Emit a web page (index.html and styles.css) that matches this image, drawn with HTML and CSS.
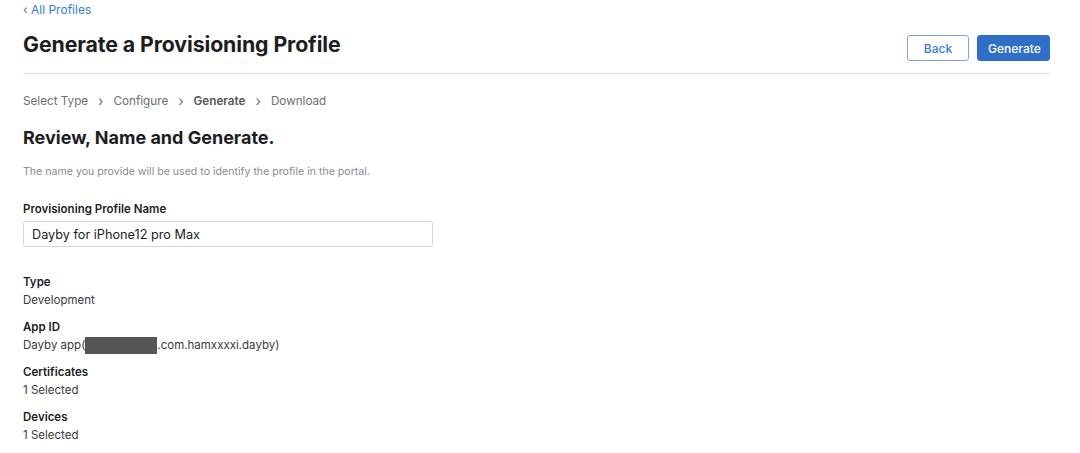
FILE: index.html
```html
<!DOCTYPE html>
<html lang="en">
<head>
    <meta charset="UTF-8">
    <title>Generate a Provisioning Profile</title>
    <link rel="stylesheet" href="styles.css">
</head>
<body>
    <div class="page">
        <a class="back-link" href="#">&lsaquo; All Profiles</a>
        <div class="header">
            <h1>Generate a Provisioning Profile</h1>
            <div class="actions">
                <button type="button" class="btn btn-secondary">Back</button>
                <button type="button" class="btn btn-primary">Generate</button>
            </div>
        </div>

        <ol class="steps">
            <li>Select Type</li>
            <li class="sep">&rsaquo;</li>
            <li>Configure</li>
            <li class="sep">&rsaquo;</li>
            <li class="current">Generate</li>
            <li class="sep">&rsaquo;</li>
            <li>Download</li>
        </ol>

        <h2>Review, Name and Generate.</h2>
        <p class="hint">The name you provide will be used to identify the profile in the portal.</p>

        <label class="field-label" for="profileName">Provisioning Profile Name</label>
        <input type="text" id="profileName" class="text-input" value="Dayby for iPhone12 pro Max">

        <dl class="summary">
            <dt>Type</dt>
            <dd>Development</dd>
            <dt>App ID</dt>
            <dd>Dayby app(<span class="redacted"></span>.com.hamxxxxi.dayby)</dd>
            <dt>Certificates</dt>
            <dd>1 Selected</dd>
            <dt>Devices</dt>
            <dd>1 Selected</dd>
        </dl>
    </div>
</body>
</html>
```

FILE: styles.css
```css
body {
    margin: 0;
    font-family: Inter, "Liberation Sans", Arial, sans-serif;
    color: #1d1d1f;
    background-color: #ffffff;
}
.page {
    width: 1027px;
    padding: 3px 0 0 23px;
}
.back-link {
    display: block;
    font-size: 12px;
    line-height: 14px;
    color: #3a7bd5;
    text-decoration: none;
}
.header {
    display: flex;
    align-items: flex-start;
    justify-content: space-between;
    height: 56px;
    border-bottom: 1px solid #e2e2e2;
}
h1 {
    margin: 14px 0 0;
    font-size: 21.3px;
    line-height: 26px;
    font-weight: 700;
    letter-spacing: -0.1px;
}
.actions {
    display: flex;
    gap: 8px;
    margin-top: 18px;
}
.btn {
    height: 26px;
    padding: 0 10px;
    border-radius: 3px;
    font-family: inherit;
    font-size: 12px;
    font-weight: 500;
    cursor: pointer;
}
.btn-secondary {
    width: 62px;
    background-color: #ffffff;
    color: #3a7bd5;
    border: 1px solid #7aa6e3;
}
.btn-primary {
    width: 73px;
    background-color: #2f6fc7;
    color: #ffffff;
    border: 1px solid #2f6fc7;
}
.steps {
    display: flex;
    gap: 10px;
    list-style: none;
    margin: 20px 0 0;
    padding: 0;
    font-size: 11.7px;
    line-height: 14px;
    color: #6e6e73;
}
.steps .sep {
    font-size: 14px;
    color: #6e6e73;
}
.steps .current {
    font-weight: 600;
    color: #555558;
}
h2 {
    margin: 19px 0 0;
    font-size: 18px;
    line-height: 22px;
    font-weight: 700;
}
.hint {
    margin: 16px 0 0;
    font-size: 10.6px;
    line-height: 14px;
    color: #8a8a8e;
}
.field-label {
    display: block;
    margin-top: 23px;
    font-size: 11.5px;
    line-height: 14px;
    font-weight: 600;
}
.text-input {
    display: block;
    box-sizing: border-box;
    width: 410px;
    height: 26px;
    margin-top: 5px;
    padding: 0 8px;
    border: 1px solid #d6d6d6;
    border-radius: 3px;
    font-family: inherit;
    font-size: 12.7px;
    color: #1d1d1f;
}
.summary {
    margin: 27px 0 0;
    font-size: 11.5px;
    line-height: 16.5px;
}
.summary dt {
    font-weight: 600;
}
.summary dd {
    margin: 1px 0 11px;
    color: #3a3a3c;
}
.redacted {
    display: inline-block;
    width: 72px;
    height: 17px;
    margin-bottom: -1px;
    vertical-align: top;
    background-color: #555555;
}
```
